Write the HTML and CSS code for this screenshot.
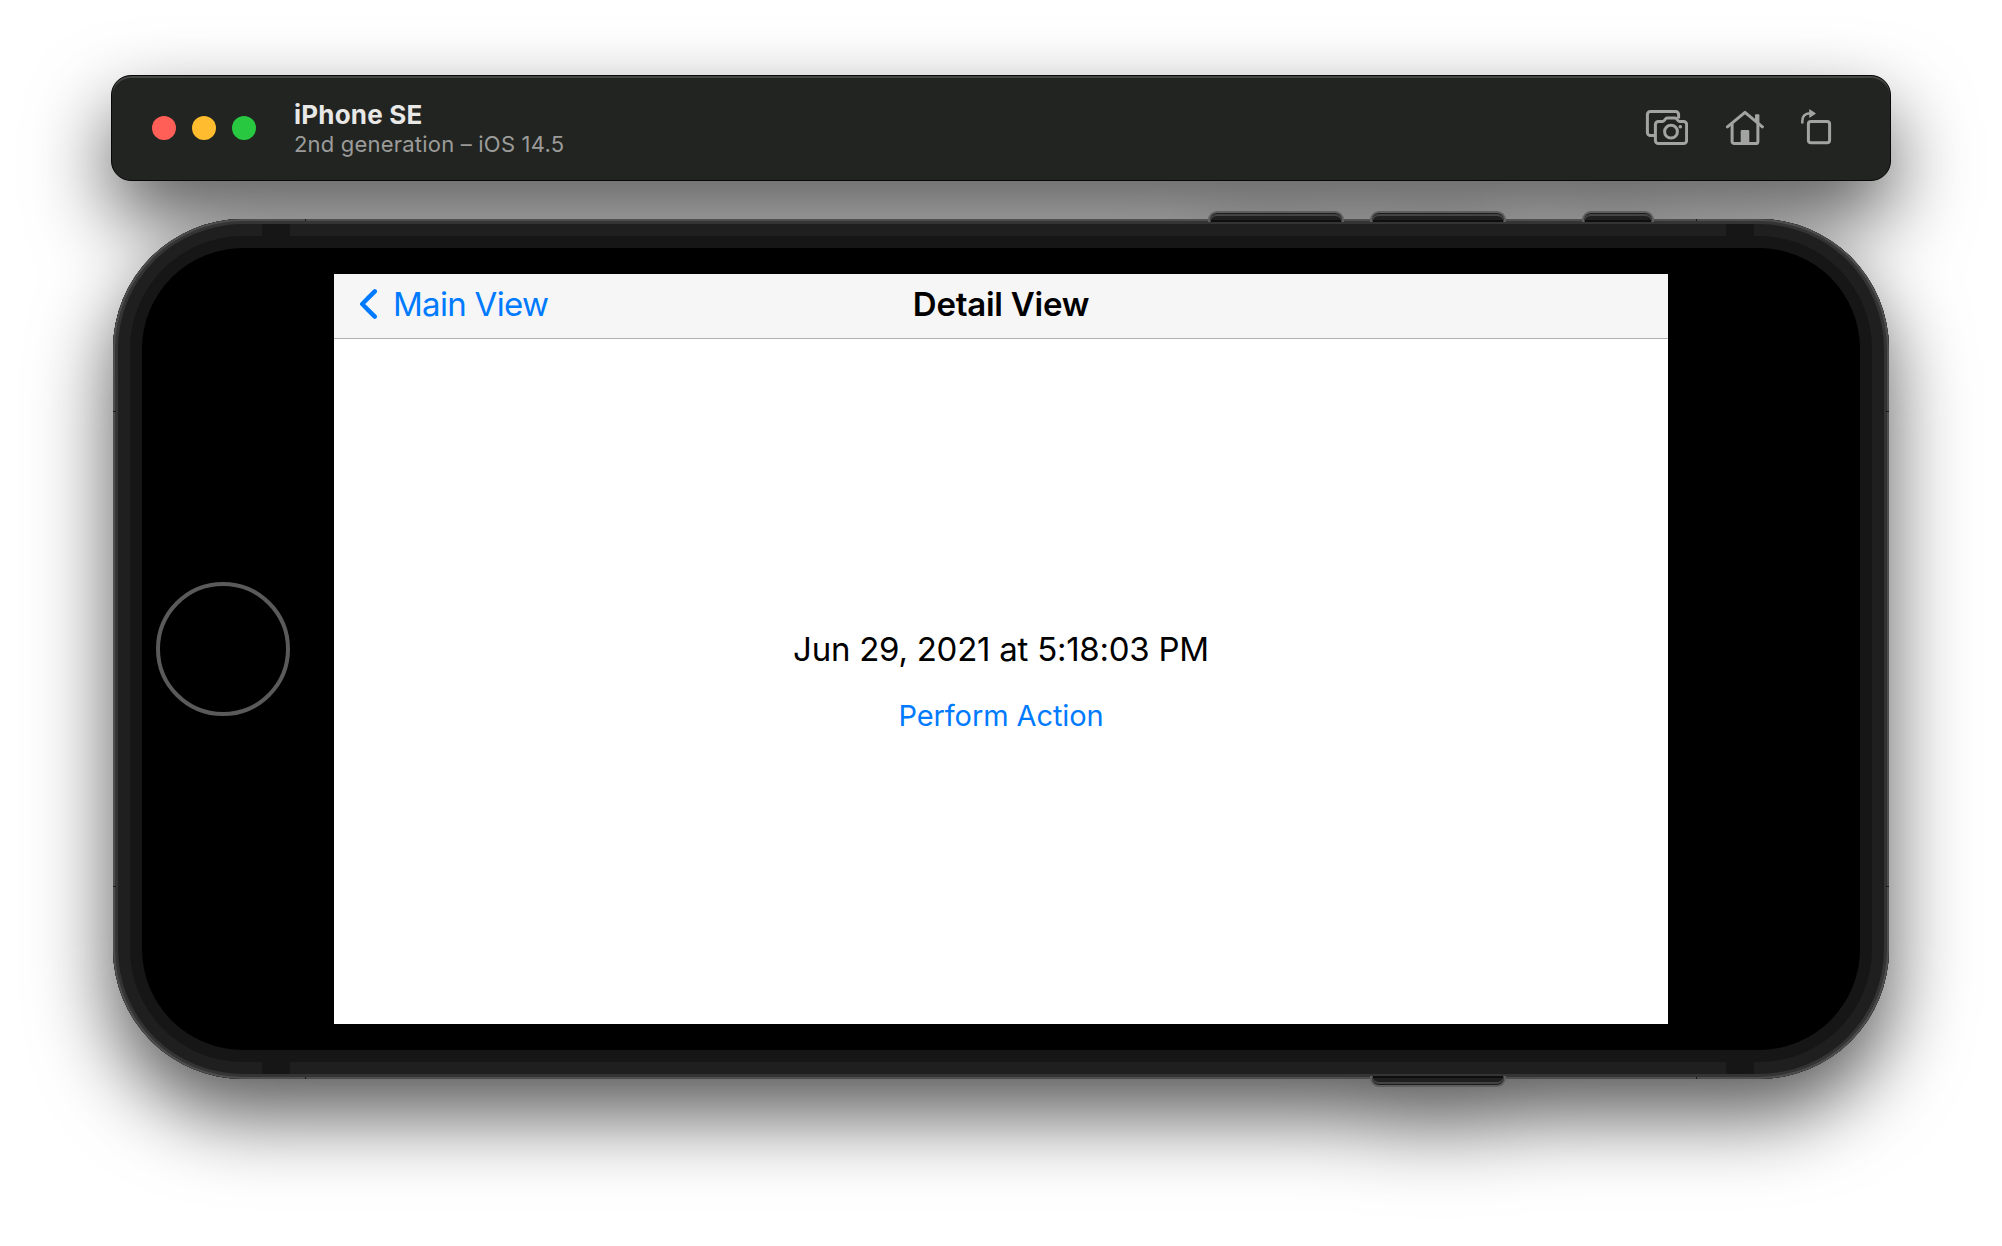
FILE: index.html
```html
<!DOCTYPE html>
<html lang="en">
<head>
<meta charset="utf-8">
<title>iPhone SE</title>
<link rel="stylesheet" href="styles.css">
</head>
<body>
<main class="simulator">
  <header class="toolbar">
    <div class="lights">
      <span class="light close"></span>
      <span class="light minimize"></span>
      <span class="light zoom"></span>
    </div>
    <div class="heading">
      <div class="name"><span>iPhone SE</span></div>
      <div class="version"><span>2nd generation – iOS 14.5</span></div>
    </div>
    <div class="tools">
      <svg class="tool" width="44" height="38" viewBox="0 0 44 38" fill="none" stroke="#a3a4a2" stroke-width="3" stroke-linejoin="round">
        <path d="M10.4 26.6H6.4a3 3 0 0 1-3-3V5.4a3 3 0 0 1 3-3h25.2a3 3 0 0 1 3 3V9.4"/>
        <path d="M14.4 12.4h4.2c2.4 0 2.2-3.3 4.6-3.3h7.8c2.4 0 2.2 3.3 4.6 3.3h4a3 3 0 0 1 3 3v16.2a3 3 0 0 1-3 3H14.4a3 3 0 0 1-3-3V15.4a3 3 0 0 1 3-3z"/>
        <circle cx="27" cy="22.7" r="6.4"/>
        <circle cx="36.3" cy="17.8" r="1.8" fill="#a3a4a2" stroke="none"/>
      </svg>
      <svg class="tool" width="40" height="38" viewBox="0 0 40 38" fill="none" stroke="#a3a4a2" stroke-width="3" stroke-linejoin="round" stroke-linecap="round">
        <path d="M3.4 17.8 21 3.4l17.4 14.4"/>
        <path d="M8.1 15v17.4a2.2 2.2 0 0 0 2.2 2.2h21.4a2.2 2.2 0 0 0 2.2-2.2V15"/>
        <path d="M31 6.3a1 1 0 0 1 1-1h2.4a1 1 0 0 1 1 1v9L31 12z" fill="#a3a4a2" stroke="none"/>
        <path d="M16.7 35V22.2a1.2 1.2 0 0 1 1.2-1.2h6.2a1.2 1.2 0 0 1 1.2 1.2V35z" fill="#a3a4a2" stroke="none"/>
      </svg>
      <svg class="tool" width="34" height="38" viewBox="0 0 34 38" fill="none" stroke="#a3a4a2" stroke-width="3">
        <rect x="8.4" y="12.4" width="21.2" height="21.4" rx="2.6"/>
        <path d="M2.3 14.4V12q0-7.6 7.8-7.8" stroke-width="2.5"/>
        <path d="M9.2.8v7.4q0 .8.8.4l5.4-3.6q.8-.5 0-1L10 .4Q9.2 0 9.2.8z" fill="#a3a4a2" stroke="none"/>
      </svg>
    </div>
  </header>
  <section class="phone">
    <i class="key key-a"></i><i class="key key-b"></i><i class="key key-c"></i><i class="key key-d"></i>
    <i class="band band-tl"></i><i class="band band-tr"></i><i class="band band-bl"></i><i class="band band-br"></i>
    <i class="tick tick-tl"></i><i class="tick tick-tr"></i><i class="tick tick-bl"></i><i class="tick tick-br"></i>
    <i class="tick side tick-lt"></i><i class="tick side tick-lb"></i><i class="tick side tick-rt"></i><i class="tick side tick-rb"></i>
    <div class="home"></div>
    <div class="screen">
      <nav class="navbar">
        <a class="back">
          <svg width="20" height="32" viewBox="0 0 20 32" fill="none" stroke="#007aff" stroke-width="4.4" stroke-linecap="round" stroke-linejoin="round"><path d="M15.8 3.4 3.2 16l12.6 12.6"/></svg>
          <span>Main View</span>
        </a>
        <h1 class="title"><span>Detail View</span></h1>
        <div></div>
      </nav>
      <div class="content">
        <div class="date"><span>Jun 29, 2021 at 5:18:03 PM</span></div>
        <div class="action"><span>Perform Action</span></div>
      </div>
    </div>
  </section>
</main>
</body>
</html>
```
FILE: styles.css
```css
* { box-sizing: border-box; }
body {
  margin: 0;
  height: 1246px;
  overflow: hidden;
  background: #fff;
  font-family: Inter, "Liberation Sans", sans-serif;
}
.simulator {
  width: 1780px;
  margin: 0 auto;
  padding-top: 75px;
  display: flex;
  flex-direction: column;
  align-items: center;
  gap: 38px;
  filter: drop-shadow(0 36px 40px rgba(0, 0, 0, .66));
}
.toolbar {
  width: 1780px;
  height: 106px;
  border: 1px solid #060706;
  border-radius: 20px;
  background: #222421;
  box-shadow: inset 0 2px 0 #454744;
  display: flex;
  align-items: center;
  padding: 0 56px 0 40px;
}
.lights { display: flex; gap: 16px; }
.light { width: 24px; height: 24px; border-radius: 50%; }
.close { background: #ff5f57; }
.minimize { background: #febc2e; }
.zoom { background: #28c840; }
.heading { margin-left: 38px; padding-top: 2px; white-space: nowrap; }
.name { font-size: 26px; line-height: 30px; font-weight: 700; color: #e8e8e7; letter-spacing: .2px; }
.version { font-size: 22px; line-height: 28px; color: #9b9c9a; letter-spacing: .2px; }
.tools { margin-left: auto; display: flex; gap: 36px; }
.tool { display: block; }

.phone {
  position: relative;
  width: 1776px;
  height: 860px;
  border-radius: 130px;
  background: #000;
  box-shadow: inset 0 0 0 2px #4e4e4e, inset 0 0 0 5px #343434, inset 0 0 0 17px #1f1f1f, inset 0 0 0 29px #161616;
  display: flex;
  align-items: center;
  padding-left: 43px;
}
.key {
  position: absolute;
  top: -8px;
  width: 136px;
  height: 11px;
  border: 2px solid #5d5e5d;
  border-bottom: 0;
  border-radius: 9px 9px 0 0;
  background: #1f1f1f;
  box-shadow: inset 0 1px 0 #1b1b1b, inset 0 3px 0 #444, inset 1px 0 0 #444, inset -1px 0 0 #444, inset 0 -2px 0 #0e0e0e;
}
.key-a { left: 1095px; }
.key-b { left: 1257px; }
.key-c { left: 1469px; width: 72px; }
.key-d { left: 1257px; top: auto; bottom: -8px; transform: scaleY(-1); }
.band { position: absolute; width: 28px; height: 12px; background: #161616; }
.band-tl { left: 149px; top: 5px; }
.band-tr { right: 135px; top: 5px; }
.band-bl { left: 149px; bottom: 5px; }
.band-br { right: 135px; bottom: 5px; }
.tick { position: absolute; width: 1px; height: 2px; background: #1a1a1a; }
.side { width: 3px; height: 1px; }
.tick-tl { left: 192px; top: 0; }
.tick-tr { right: 192px; top: 0; }
.tick-bl { left: 192px; bottom: 0; }
.tick-br { right: 192px; bottom: 0; }
.tick-lt { left: 0; top: 192px; }
.tick-lb { left: 0; bottom: 192px; }
.tick-rt { right: 0; top: 192px; }
.tick-rb { right: 0; bottom: 192px; }
.home { width: 134px; height: 134px; border: 4px solid #5a5a5a; border-radius: 50%; }
.screen {
  width: 1334px;
  height: 750px;
  margin-left: 44px;
  background: #fff;
  display: flex;
  flex-direction: column;
}
.navbar {
  height: 65px;
  background: #f6f6f6;
  border-bottom: 1px solid #b0b0b0;
  display: grid;
  grid-template-columns: 1fr auto 1fr;
  align-items: center;
  line-height: 40px;
  font-size: 33px;
  padding-bottom: 4px;
  white-space: nowrap;
}
.back { display: flex; align-items: center; gap: 14px; padding-left: 25px; color: #007aff; letter-spacing: -.7px; }
.title { margin: 0; font-size: 33px; font-weight: 600; letter-spacing: -.25px; color: #000; }
.content {
  flex: 1;
  display: flex;
  flex-direction: column;
  align-items: center;
  padding-top: 290px;
  gap: 27px;
  white-space: nowrap;
}
.date { font-size: 33px; line-height: 40px; color: #000; letter-spacing: -.25px; }
.action { font-size: 29px; line-height: 40px; color: #007aff; letter-spacing: -.1px; }
```
